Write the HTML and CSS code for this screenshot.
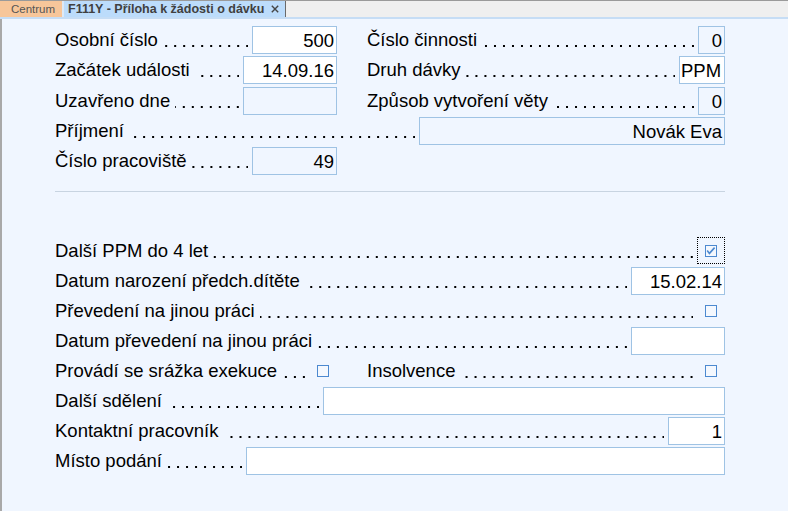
FILE: index.html
```html
<!DOCTYPE html>
<html lang="cs">
<head>
<meta charset="utf-8">
<title>F111Y - Příloha k žádosti o dávku</title>
<link rel="stylesheet" href="styles.css">
</head>
<body>
<div class="tabbar">
  <div class="tab tab-centrum">Centrum</div>
  <div class="tab tab-active">
    <span class="tab-title">F111Y - Příloha k žádosti o dávku</span>
    <svg class="tab-close" width="8" height="8" viewBox="0 0 8 8"><path d="M0.8 0.8 L7.2 7.2 M7.2 0.8 L0.8 7.2" stroke="#454545" stroke-width="1.4" fill="none"/></svg>
  </div>
</div>
<div class="content">
  <div class="upper">
    <div class="field"><span class="label">Osobní číslo</span><span class="leader"></span><span class="box edit w85">500</span></div>
    <div class="field"><span class="label">Číslo činnosti</span><span class="leader"></span><span class="box w27">0</span></div>
    <div class="field"><span class="label">Začátek události</span><span class="leader"></span><span class="box edit w94">14.09.16</span></div>
    <div class="field"><span class="label">Druh dávky</span><span class="leader"></span><span class="box edit w46 tight">PPM</span></div>
    <div class="field"><span class="label">Uzavřeno dne</span><span class="leader"></span><span class="box w94"></span></div>
    <div class="field"><span class="label">Způsob vytvoření věty</span><span class="leader"></span><span class="box w27">0</span></div>
    <div class="field span2"><span class="label">Příjmení</span><span class="leader"></span><span class="box w306">Novák Eva</span></div>
    <div class="field"><span class="label">Číslo pracoviště</span><span class="leader"></span><span class="box w85">49</span></div>
  </div>
  <div class="separator"></div>
  <div class="lower">
    <div class="field"><span class="label">Další PPM do 4 let</span><span class="leader"></span>
      <span class="cbwrap focus"><svg class="cb" width="12" height="12" viewBox="0 0 12 12"><rect x="0.5" y="0.5" width="11" height="11" fill="#f4f8fe" stroke="#4c89d0"/><polyline points="2.2,5.6 4.4,8.4 9.6,2.6" fill="none" stroke="#4c89d0" stroke-width="1.6"/></svg></span></div>
    <div class="field"><span class="label">Datum narození předch.dítěte</span><span class="leader"></span><span class="box edit w94">15.02.14</span></div>
    <div class="field"><span class="label">Převedení na jinou práci</span><span class="leader"></span>
      <span class="cbwrap"><svg class="cb" width="12" height="12" viewBox="0 0 12 12"><rect x="0.5" y="0.5" width="11" height="11" fill="#f4f8fe" stroke="#4c89d0"/></svg></span></div>
    <div class="field"><span class="label">Datum převedení na jinou práci</span><span class="leader"></span><span class="box edit w94"></span></div>
    <div class="pair">
      <div class="field"><span class="label">Provádí se srážka exekuce</span><span class="leader"></span>
        <span class="cbwrap"><svg class="cb" width="12" height="12" viewBox="0 0 12 12"><rect x="0.5" y="0.5" width="11" height="11" fill="#f4f8fe" stroke="#4c89d0"/></svg></span></div>
      <div class="field"><span class="label">Insolvence</span><span class="leader"></span>
        <span class="cbwrap"><svg class="cb" width="12" height="12" viewBox="0 0 12 12"><rect x="0.5" y="0.5" width="11" height="11" fill="#f4f8fe" stroke="#4c89d0"/></svg></span></div>
    </div>
    <div class="field"><span class="label">Další sdělení</span><span class="leader"></span><span class="box edit w402"></span></div>
    <div class="field"><span class="label">Kontaktní pracovník</span><span class="leader"></span><span class="box edit w57">1</span></div>
    <div class="field"><span class="label">Místo podání</span><span class="leader"></span><span class="box edit w479"></span></div>
  </div>
</div>
</body>
</html>
```
FILE: styles.css
```css
html, body {
  margin: 0;
  padding: 0;
}
body {
  width: 788px;
  height: 511px;
  overflow: hidden;
  background: #f0f6ff;
  font-family: "Liberation Sans", Arial, sans-serif;
  color: #000;
}

/* ---- tab bar ---- */
.tabbar {
  display: flex;
  height: 16px;
  background: #efefef;
  border-top: 1px solid #9a9a9a;
  border-bottom: 2px solid #c6ddf5;
}
.tab {
  height: 16px;
  display: flex;
  align-items: center;
  box-sizing: border-box;
  white-space: nowrap;
}
.tab-centrum {
  width: 64px;
  background: #f7c69a;
  color: #555;
  font-size: 11.5px;
  padding-left: 11px;
  border-right: 2px solid #dde9f6;
}
.tab-active {
  width: 222px;
  background: #bcdcfb;
  color: #404040;
  font-size: 12.5px;
  font-weight: bold;
  padding-left: 4px;
  padding-right: 6px;
  border-right: 1px solid #6a6a6a;
}
.tab-close {
  margin-left: auto;
  display: block;
}

/* ---- content ---- */
.content {
  height: 492px;
  box-sizing: border-box;
  border-left: 2px solid #a9a9a9;
  padding: 7px 0 0 53px;
}
.upper {
  width: 670px;
  display: grid;
  grid-template-columns: 282px 358px;
  column-gap: 30px;
  row-gap: 2.25px;
  grid-auto-rows: 28px;
}
.span2 {
  grid-column: 1 / 3;
}
.separator {
  width: 670px;
  height: 1px;
  background: #c8d4e1;
  margin: 16px 0 45px;
}
.lower {
  width: 670px;
  display: grid;
  grid-template-columns: 670px;
  row-gap: 2px;
  grid-auto-rows: 28px;
}
.pair {
  display: grid;
  grid-template-columns: 282px 358px;
  column-gap: 30px;
}

.field {
  display: flex;
  align-items: stretch;
  height: 28px;
}
.label {
  font-size: 18.5px;
  line-height: 24px;
  padding-top: 2px;
  white-space: nowrap;
}
.leader {
  flex: 1;
  margin: 0 4px 0 0;
  padding-left: 5px;
  background-image: linear-gradient(to left, #000 2px, transparent 2px);
  background-size: 9px 2px;
  background-repeat: repeat-x;
  background-position: right 0 top 19px;
  background-clip: content-box;
}

.box {
  box-sizing: border-box;
  height: 28px;
  border: 1px solid #9fc3e4;
  font-size: 18.5px;
  line-height: 24px;
  padding: 2px 2px 0 0;
  text-align: right;
  white-space: nowrap;
  overflow: hidden;
}
.box.tight {
  padding-right: 2px;
  text-align: center;
}
.edit {
  background: #fff;
}
.w27 { width: 27px; }
.w46 { width: 46px; }
.w57 { width: 57px; }
.w85 { width: 85px; }
.w94 { width: 94px; }
.w306 { width: 306px; }
.w402 { width: 402px; }
.w479 { width: 479px; }

.cbwrap {
  box-sizing: border-box;
  width: 28px;
  height: 27px;
  display: flex;
  align-items: center;
  justify-content: center;
  border: 1px solid transparent;
}
.cbwrap.focus {
  border: 1px dotted #000;
}
.cb {
  display: block;
}
```
